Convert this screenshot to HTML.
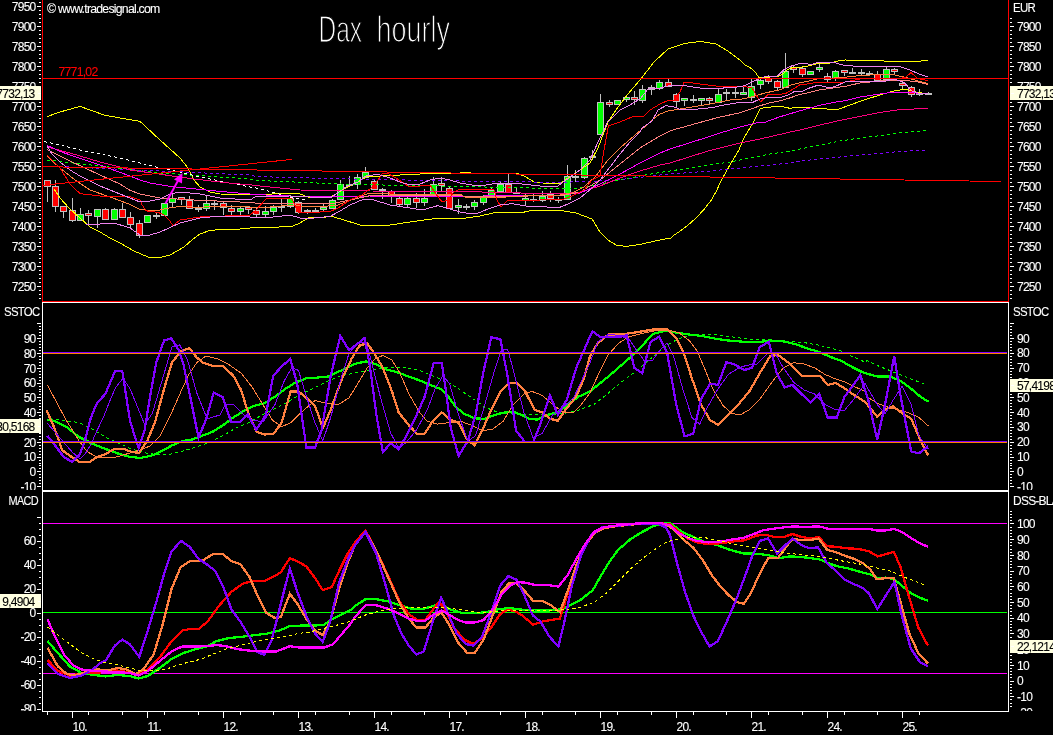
<!DOCTYPE html>
<html><head><meta charset="utf-8"><title>Dax hourly</title>
<style>html,body{margin:0;padding:0;background:#000;overflow:hidden}svg{display:block;will-change:transform;-webkit-font-smoothing:antialiased}</style></head>
<body>
<svg width="1053" height="735" viewBox="0 0 1053 735" shape-rendering="crispEdges">
<rect width="1053" height="735" fill="#000"/>
<defs><clipPath id="c3"><rect x="0" y="491" width="1053" height="220"/></clipPath><clipPath id="c2"><rect x="0" y="302" width="1053" height="188"/></clipPath><clipPath id="c1"><rect x="0" y="0" width="1053" height="301"/></clipPath></defs>
<g clip-path="url(#c1)"><rect x="47" y="180" width="1" height="22" fill="#c0c0c0"/>
<rect x="44.5" y="180.5" width="6" height="6" fill="#ff0000" stroke="#c0c0c0"/>
<rect x="55" y="180" width="1" height="32" fill="#c0c0c0"/>
<rect x="52.5" y="186.5" width="6" height="20" fill="#ff0000" stroke="#c0c0c0"/>
<rect x="63" y="206" width="1" height="12" fill="#c0c0c0"/>
<rect x="60.5" y="206.5" width="6" height="5" fill="#ff0000" stroke="#c0c0c0"/>
<rect x="72" y="198" width="1" height="24" fill="#c0c0c0"/>
<rect x="69.5" y="210.5" width="6" height="10" fill="#ff0000" stroke="#c0c0c0"/>
<rect x="80" y="208" width="1" height="12" fill="#c0c0c0"/>
<rect x="77.5" y="214.5" width="6" height="6" fill="#00ff00" stroke="#c0c0c0"/>
<rect x="88" y="210" width="1" height="14" fill="#c0c0c0"/>
<rect x="85" y="213" width="7" height="3" fill="#c0c0c0"/>
<rect x="86" y="214" width="5" height="1" fill="#ff0000"/>
<rect x="97" y="209" width="1" height="19" fill="#c0c0c0"/>
<rect x="94.5" y="209.5" width="6" height="7" fill="#00ff00" stroke="#c0c0c0"/>
<rect x="105" y="208" width="1" height="11" fill="#c0c0c0"/>
<rect x="102.5" y="209.5" width="6" height="10" fill="#ff0000" stroke="#c0c0c0"/>
<rect x="114" y="208" width="1" height="11" fill="#c0c0c0"/>
<rect x="111.5" y="209.5" width="6" height="10" fill="#00ff00" stroke="#c0c0c0"/>
<rect x="122" y="203" width="1" height="14" fill="#c0c0c0"/>
<rect x="119.5" y="209.5" width="6" height="8" fill="#ff0000" stroke="#c0c0c0"/>
<rect x="130" y="212" width="1" height="16" fill="#c0c0c0"/>
<rect x="127.5" y="217.5" width="6" height="7" fill="#ff0000" stroke="#c0c0c0"/>
<rect x="139" y="220" width="1" height="18" fill="#c0c0c0"/>
<rect x="136.5" y="223.5" width="6" height="12" fill="#ff0000" stroke="#c0c0c0"/>
<rect x="147" y="215" width="1" height="7" fill="#c0c0c0"/>
<rect x="144.5" y="215.5" width="6" height="7" fill="#00ff00" stroke="#c0c0c0"/>
<rect x="156" y="213" width="1" height="6" fill="#c0c0c0"/>
<rect x="153" y="215" width="7" height="2" fill="#c0c0c0"/>
<rect x="164" y="203" width="1" height="12" fill="#c0c0c0"/>
<rect x="161.5" y="203.5" width="6" height="12" fill="#00ff00" stroke="#c0c0c0"/>
<rect x="172" y="194" width="1" height="13" fill="#c0c0c0"/>
<rect x="169.5" y="198.5" width="6" height="4" fill="#00ff00" stroke="#c0c0c0"/>
<rect x="181" y="197" width="1" height="8" fill="#c0c0c0"/>
<rect x="178" y="197" width="7" height="3" fill="#c0c0c0"/>
<rect x="179" y="198" width="5" height="1" fill="#ff0000"/>
<rect x="189" y="196" width="1" height="12" fill="#c0c0c0"/>
<rect x="186.5" y="200.5" width="6" height="8" fill="#ff0000" stroke="#c0c0c0"/>
<rect x="198" y="205" width="1" height="7" fill="#c0c0c0"/>
<rect x="195" y="208" width="7" height="2" fill="#c0c0c0"/>
<rect x="206" y="196" width="1" height="15" fill="#c0c0c0"/>
<rect x="203.5" y="203.5" width="6" height="5" fill="#00ff00" stroke="#c0c0c0"/>
<rect x="214" y="200" width="1" height="10" fill="#c0c0c0"/>
<rect x="211" y="203" width="7" height="2" fill="#c0c0c0"/>
<rect x="223" y="201" width="1" height="14" fill="#c0c0c0"/>
<rect x="220.5" y="203.5" width="6" height="4" fill="#ff0000" stroke="#c0c0c0"/>
<rect x="231" y="205" width="1" height="10" fill="#c0c0c0"/>
<rect x="228.5" y="208.5" width="6" height="3" fill="#ff0000" stroke="#c0c0c0"/>
<rect x="240" y="207" width="1" height="8" fill="#c0c0c0"/>
<rect x="237.5" y="208.5" width="6" height="3" fill="#00ff00" stroke="#c0c0c0"/>
<rect x="248" y="207" width="1" height="7" fill="#c0c0c0"/>
<rect x="245" y="207" width="7" height="3" fill="#c0c0c0"/>
<rect x="246" y="208" width="5" height="1" fill="#ff0000"/>
<rect x="256" y="208" width="1" height="9" fill="#c0c0c0"/>
<rect x="253.5" y="210.5" width="6" height="4" fill="#ff0000" stroke="#c0c0c0"/>
<rect x="265" y="206" width="1" height="12" fill="#c0c0c0"/>
<rect x="262.5" y="211.5" width="6" height="3" fill="#00ff00" stroke="#c0c0c0"/>
<rect x="273" y="205" width="1" height="10" fill="#c0c0c0"/>
<rect x="270.5" y="207.5" width="6" height="4" fill="#00ff00" stroke="#c0c0c0"/>
<rect x="281" y="199" width="1" height="13" fill="#c0c0c0"/>
<rect x="278" y="206" width="7" height="2" fill="#c0c0c0"/>
<rect x="290" y="195" width="1" height="13" fill="#c0c0c0"/>
<rect x="287.5" y="198.5" width="6" height="8" fill="#00ff00" stroke="#c0c0c0"/>
<rect x="298" y="201" width="1" height="13" fill="#c0c0c0"/>
<rect x="295.5" y="202.5" width="6" height="10" fill="#ff0000" stroke="#c0c0c0"/>
<rect x="307" y="209" width="1" height="5" fill="#c0c0c0"/>
<rect x="304" y="210" width="7" height="2" fill="#c0c0c0"/>
<rect x="315" y="208" width="1" height="5" fill="#c0c0c0"/>
<rect x="312" y="210" width="7" height="2" fill="#c0c0c0"/>
<rect x="323" y="203" width="1" height="9" fill="#c0c0c0"/>
<rect x="320" y="207" width="7" height="3" fill="#c0c0c0"/>
<rect x="321" y="208" width="5" height="1" fill="#00ff00"/>
<rect x="332" y="199" width="1" height="10" fill="#c0c0c0"/>
<rect x="329.5" y="200.5" width="6" height="8" fill="#00ff00" stroke="#c0c0c0"/>
<rect x="340" y="180" width="1" height="20" fill="#c0c0c0"/>
<rect x="337.5" y="184.5" width="6" height="15" fill="#00ff00" stroke="#c0c0c0"/>
<rect x="349" y="176" width="1" height="11" fill="#c0c0c0"/>
<rect x="346" y="184" width="7" height="2" fill="#c0c0c0"/>
<rect x="357" y="174" width="1" height="15" fill="#c0c0c0"/>
<rect x="354.5" y="177.5" width="6" height="7" fill="#00ff00" stroke="#c0c0c0"/>
<rect x="365" y="167" width="1" height="11" fill="#c0c0c0"/>
<rect x="362.5" y="172.5" width="6" height="5" fill="#00ff00" stroke="#c0c0c0"/>
<rect x="374" y="179" width="1" height="11" fill="#c0c0c0"/>
<rect x="371.5" y="181.5" width="6" height="8" fill="#ff0000" stroke="#c0c0c0"/>
<rect x="382" y="188" width="1" height="11" fill="#c0c0c0"/>
<rect x="379" y="189" width="7" height="2" fill="#c0c0c0"/>
<rect x="391" y="190" width="1" height="13" fill="#c0c0c0"/>
<rect x="388.5" y="191.5" width="6" height="5" fill="#ff0000" stroke="#c0c0c0"/>
<rect x="399" y="195" width="1" height="12" fill="#c0c0c0"/>
<rect x="396.5" y="198.5" width="6" height="6" fill="#ff0000" stroke="#c0c0c0"/>
<rect x="407" y="197" width="1" height="10" fill="#c0c0c0"/>
<rect x="404.5" y="198.5" width="6" height="6" fill="#00ff00" stroke="#c0c0c0"/>
<rect x="416" y="193" width="1" height="15" fill="#c0c0c0"/>
<rect x="413.5" y="198.5" width="6" height="4" fill="#ff0000" stroke="#c0c0c0"/>
<rect x="424" y="189" width="1" height="17" fill="#c0c0c0"/>
<rect x="421.5" y="198.5" width="6" height="4" fill="#00ff00" stroke="#c0c0c0"/>
<rect x="433" y="177" width="1" height="18" fill="#c0c0c0"/>
<rect x="430.5" y="184.5" width="6" height="11" fill="#00ff00" stroke="#c0c0c0"/>
<rect x="441" y="177" width="1" height="14" fill="#c0c0c0"/>
<rect x="438" y="183" width="7" height="3" fill="#c0c0c0"/>
<rect x="439" y="184" width="5" height="1" fill="#ff0000"/>
<rect x="449" y="186" width="1" height="23" fill="#c0c0c0"/>
<rect x="446.5" y="188.5" width="6" height="20" fill="#ff0000" stroke="#c0c0c0"/>
<rect x="458" y="199" width="1" height="15" fill="#c0c0c0"/>
<rect x="455" y="205" width="7" height="3" fill="#c0c0c0"/>
<rect x="456" y="206" width="5" height="1" fill="#00ff00"/>
<rect x="466" y="204" width="1" height="6" fill="#c0c0c0"/>
<rect x="463" y="206" width="7" height="2" fill="#c0c0c0"/>
<rect x="474" y="200" width="1" height="10" fill="#c0c0c0"/>
<rect x="471.5" y="202.5" width="6" height="4" fill="#00ff00" stroke="#c0c0c0"/>
<rect x="483" y="195" width="1" height="10" fill="#c0c0c0"/>
<rect x="480.5" y="196.5" width="6" height="6" fill="#00ff00" stroke="#c0c0c0"/>
<rect x="491" y="187" width="1" height="10" fill="#c0c0c0"/>
<rect x="488.5" y="190.5" width="6" height="6" fill="#00ff00" stroke="#c0c0c0"/>
<rect x="500" y="182" width="1" height="10" fill="#c0c0c0"/>
<rect x="497.5" y="184.5" width="6" height="7" fill="#00ff00" stroke="#c0c0c0"/>
<rect x="508" y="174" width="1" height="19" fill="#c0c0c0"/>
<rect x="505.5" y="184.5" width="6" height="8" fill="#ff0000" stroke="#c0c0c0"/>
<rect x="516" y="187" width="1" height="7" fill="#c0c0c0"/>
<rect x="513" y="192" width="7" height="2" fill="#c0c0c0"/>
<rect x="525" y="193" width="1" height="12" fill="#c0c0c0"/>
<rect x="522" y="198" width="7" height="3" fill="#c0c0c0"/>
<rect x="523" y="199" width="5" height="1" fill="#00ff00"/>
<rect x="533" y="193" width="1" height="9" fill="#c0c0c0"/>
<rect x="530" y="199" width="7" height="2" fill="#c0c0c0"/>
<rect x="542" y="191" width="1" height="11" fill="#c0c0c0"/>
<rect x="539.5" y="196.5" width="6" height="4" fill="#00ff00" stroke="#c0c0c0"/>
<rect x="550" y="191" width="1" height="11" fill="#c0c0c0"/>
<rect x="547.5" y="194.5" width="6" height="4" fill="#ff0000" stroke="#c0c0c0"/>
<rect x="558" y="197" width="1" height="6" fill="#c0c0c0"/>
<rect x="555" y="199" width="7" height="2" fill="#c0c0c0"/>
<rect x="567" y="165" width="1" height="35" fill="#c0c0c0"/>
<rect x="564.5" y="176.5" width="6" height="23" fill="#00ff00" stroke="#c0c0c0"/>
<rect x="575" y="170" width="1" height="12" fill="#c0c0c0"/>
<rect x="572" y="176" width="7" height="2" fill="#c0c0c0"/>
<rect x="584" y="157" width="1" height="22" fill="#c0c0c0"/>
<rect x="581.5" y="158.5" width="6" height="19" fill="#00ff00" stroke="#c0c0c0"/>
<rect x="592" y="150" width="1" height="10" fill="#c0c0c0"/>
<rect x="589" y="156" width="7" height="2" fill="#c0c0c0"/>
<rect x="600" y="94" width="1" height="40" fill="#c0c0c0"/>
<rect x="597.5" y="102.5" width="6" height="32" fill="#00ff00" stroke="#c0c0c0"/>
<rect x="609" y="100" width="1" height="7" fill="#c0c0c0"/>
<rect x="606" y="102" width="7" height="3" fill="#c0c0c0"/>
<rect x="607" y="103" width="5" height="1" fill="#ff0000"/>
<rect x="617" y="100" width="1" height="5" fill="#c0c0c0"/>
<rect x="614.5" y="100.5" width="6" height="4" fill="#00ff00" stroke="#c0c0c0"/>
<rect x="626" y="96" width="1" height="6" fill="#c0c0c0"/>
<rect x="623" y="97" width="7" height="3" fill="#c0c0c0"/>
<rect x="624" y="98" width="5" height="1" fill="#00ff00"/>
<rect x="634" y="91" width="1" height="14" fill="#c0c0c0"/>
<rect x="631" y="97" width="7" height="3" fill="#c0c0c0"/>
<rect x="632" y="98" width="5" height="1" fill="#ff0000"/>
<rect x="642" y="85" width="1" height="18" fill="#c0c0c0"/>
<rect x="639.5" y="89.5" width="6" height="11" fill="#00ff00" stroke="#c0c0c0"/>
<rect x="651" y="85" width="1" height="10" fill="#c0c0c0"/>
<rect x="648" y="87" width="7" height="3" fill="#c0c0c0"/>
<rect x="649" y="88" width="5" height="1" fill="#00ff00"/>
<rect x="659" y="80" width="1" height="10" fill="#c0c0c0"/>
<rect x="656.5" y="82.5" width="6" height="6" fill="#00ff00" stroke="#c0c0c0"/>
<rect x="668" y="78" width="1" height="9" fill="#c0c0c0"/>
<rect x="665.5" y="82.5" width="6" height="4" fill="#ff0000" stroke="#c0c0c0"/>
<rect x="676" y="93" width="1" height="15" fill="#c0c0c0"/>
<rect x="673.5" y="94.5" width="6" height="7" fill="#ff0000" stroke="#c0c0c0"/>
<rect x="684" y="99" width="1" height="7" fill="#c0c0c0"/>
<rect x="681" y="98" width="7" height="3" fill="#c0c0c0"/>
<rect x="682" y="99" width="5" height="1" fill="#00ff00"/>
<rect x="693" y="95" width="1" height="8" fill="#c0c0c0"/>
<rect x="690" y="99" width="7" height="2" fill="#c0c0c0"/>
<rect x="701" y="99" width="1" height="6" fill="#c0c0c0"/>
<rect x="698" y="98" width="7" height="3" fill="#c0c0c0"/>
<rect x="699" y="99" width="5" height="1" fill="#00ff00"/>
<rect x="709" y="97" width="1" height="7" fill="#c0c0c0"/>
<rect x="706" y="98" width="7" height="3" fill="#c0c0c0"/>
<rect x="707" y="99" width="5" height="1" fill="#ff0000"/>
<rect x="718" y="88" width="1" height="14" fill="#c0c0c0"/>
<rect x="715.5" y="94.5" width="6" height="8" fill="#00ff00" stroke="#c0c0c0"/>
<rect x="726" y="89" width="1" height="11" fill="#c0c0c0"/>
<rect x="723" y="92" width="7" height="2" fill="#c0c0c0"/>
<rect x="735" y="88" width="1" height="10" fill="#c0c0c0"/>
<rect x="732" y="92" width="7" height="2" fill="#c0c0c0"/>
<rect x="743" y="87" width="1" height="8" fill="#c0c0c0"/>
<rect x="740" y="92" width="7" height="3" fill="#c0c0c0"/>
<rect x="741" y="93" width="5" height="1" fill="#00ff00"/>
<rect x="751" y="79" width="1" height="22" fill="#c0c0c0"/>
<rect x="748.5" y="86.5" width="6" height="11" fill="#00ff00" stroke="#c0c0c0"/>
<rect x="760" y="77" width="1" height="12" fill="#c0c0c0"/>
<rect x="757.5" y="80.5" width="6" height="4" fill="#00ff00" stroke="#c0c0c0"/>
<rect x="768" y="75" width="1" height="9" fill="#c0c0c0"/>
<rect x="765.5" y="78.5" width="6" height="3" fill="#ff0000" stroke="#c0c0c0"/>
<rect x="777" y="80" width="1" height="10" fill="#c0c0c0"/>
<rect x="774.5" y="81.5" width="6" height="6" fill="#ff0000" stroke="#c0c0c0"/>
<rect x="785" y="53" width="1" height="34" fill="#c0c0c0"/>
<rect x="782.5" y="71.5" width="6" height="16" fill="#00ff00" stroke="#c0c0c0"/>
<rect x="793" y="66" width="1" height="7" fill="#c0c0c0"/>
<rect x="790" y="67" width="7" height="3" fill="#c0c0c0"/>
<rect x="791" y="68" width="5" height="1" fill="#ff0000"/>
<rect x="802" y="67" width="1" height="10" fill="#c0c0c0"/>
<rect x="799.5" y="68.5" width="6" height="6" fill="#ff0000" stroke="#c0c0c0"/>
<rect x="810" y="71" width="1" height="3" fill="#c0c0c0"/>
<rect x="807.5" y="71.5" width="6" height="3" fill="#00ff00" stroke="#c0c0c0"/>
<rect x="819" y="62" width="1" height="10" fill="#c0c0c0"/>
<rect x="816" y="67" width="7" height="3" fill="#c0c0c0"/>
<rect x="817" y="68" width="5" height="1" fill="#00ff00"/>
<rect x="827" y="73" width="1" height="9" fill="#c0c0c0"/>
<rect x="824.5" y="76.5" width="6" height="3" fill="#ff0000" stroke="#c0c0c0"/>
<rect x="835" y="70" width="1" height="11" fill="#c0c0c0"/>
<rect x="832.5" y="71.5" width="6" height="7" fill="#00ff00" stroke="#c0c0c0"/>
<rect x="844" y="70" width="1" height="6" fill="#c0c0c0"/>
<rect x="841" y="70" width="7" height="3" fill="#c0c0c0"/>
<rect x="842" y="71" width="5" height="1" fill="#ff0000"/>
<rect x="852" y="68" width="1" height="6" fill="#c0c0c0"/>
<rect x="849" y="72" width="7" height="2" fill="#c0c0c0"/>
<rect x="861" y="69" width="1" height="7" fill="#c0c0c0"/>
<rect x="858" y="72" width="7" height="2" fill="#c0c0c0"/>
<rect x="869" y="71" width="1" height="4" fill="#c0c0c0"/>
<rect x="866" y="73" width="7" height="2" fill="#c0c0c0"/>
<rect x="877" y="71" width="1" height="11" fill="#c0c0c0"/>
<rect x="874.5" y="74.5" width="6" height="6" fill="#ff0000" stroke="#c0c0c0"/>
<rect x="886" y="67" width="1" height="12" fill="#c0c0c0"/>
<rect x="883.5" y="69.5" width="6" height="10" fill="#00ff00" stroke="#c0c0c0"/>
<rect x="894" y="68" width="1" height="6" fill="#c0c0c0"/>
<rect x="891" y="69" width="7" height="3" fill="#c0c0c0"/>
<rect x="892" y="70" width="5" height="1" fill="#ff0000"/>
<rect x="902" y="82" width="1" height="8" fill="#c0c0c0"/>
<rect x="899" y="83" width="7" height="3" fill="#c0c0c0"/>
<rect x="900" y="84" width="5" height="1" fill="#ff0000"/>
<rect x="911" y="86" width="1" height="11" fill="#c0c0c0"/>
<rect x="908.5" y="87.5" width="6" height="7" fill="#ff0000" stroke="#c0c0c0"/>
<rect x="919" y="89" width="1" height="7" fill="#c0c0c0"/>
<rect x="916" y="93" width="7" height="2" fill="#c0c0c0"/>
<rect x="928" y="92" width="1" height="3" fill="#c0c0c0"/>
<rect x="925" y="93" width="7" height="2" fill="#c0c0c0"/>
<polyline points="54.0,189.0 60.0,198.0 70.0,209.0 80.0,218.0 90.0,227.0 100.0,232.0 110.0,238.0 120.0,243.0 134.0,251.0 148.0,257.0 158.0,258.0 170.0,255.0 184.0,247.0 192.0,240.0 200.0,234.0 210.0,230.4 220.0,229.6 240.0,229.0 250.0,228.0 256.0,227.8 270.0,227.4 292.0,226.4 300.0,223.0 308.0,218.0 320.0,217.6 332.0,216.4 344.0,220.0 362.0,225.6 386.0,225.6 410.0,222.0 436.0,218.4 460.0,219.0 466.0,218.0 480.0,216.0 496.0,212.4 520.0,213.0 532.0,210.4 560.0,210.4 576.0,213.0 592.0,219.0 600.0,232.0 608.0,240.0 616.0,245.0 626.0,246.4 640.0,244.4 660.0,240.0 670.0,238.0 670.9,238.1 673.4,235.6 681.0,230.5 688.5,224.7 696.1,217.9 703.6,209.9 711.2,200.3 716.2,191.5 721.3,180.2 726.3,171.4 731.3,162.6 738.9,150.0 744.0,138.0 753.0,123.0 760.4,108.3 774.9,106.6 781.9,106.6 789.9,108.3 797.8,107.3 806.8,107.3 813.8,108.3 837.7,109.6 845.0,106.8 850.0,105.0 864.0,100.0 880.0,95.0 896.0,90.4 906.0,89.4 916.0,92.0 928.0,94.0" fill="none" stroke="#ffff00" stroke-width="1" />
<polyline points="47.0,116.6 60.0,112.0 80.0,106.4 104.0,115.0 120.0,118.0 140.0,121.4 160.0,140.0 180.0,158.0 188.0,168.0 194.0,180.0 200.0,187.0 210.0,192.0 220.0,194.0 240.0,194.4 250.0,194.4 256.0,194.8 280.0,193.6 300.0,194.0 308.0,197.0 330.0,197.0 336.0,194.0 346.0,188.0 358.0,182.0 366.0,177.0 380.0,176.0 400.0,175.0 420.0,174.0 436.0,173.0 460.0,173.0 466.0,172.4 480.0,174.0 518.0,173.4 526.0,177.0 534.0,182.0 548.0,183.6 560.0,183.6 568.0,178.0 580.0,170.0 590.0,163.0 598.0,148.0 604.0,132.0 608.0,122.0 616.0,110.0 628.0,94.0 640.0,80.0 654.0,62.0 668.0,49.0 684.0,43.6 700.0,41.4 716.0,44.0 728.0,51.0 740.0,60.0 745.0,65.0 750.0,67.4 755.0,71.9 758.9,77.4 772.9,76.9 777.9,76.4 782.9,73.9 786.9,69.9 791.8,67.9 799.8,67.4 805.8,66.5 811.8,65.0 819.8,63.0 829.7,63.0 839.7,60.5 845.0,60.0 874.0,60.4 900.0,62.0 916.0,61.4 928.0,60.4" fill="none" stroke="#ffff00" stroke-width="1" />
<polyline points="47.0,160.0 100.0,166.0 160.0,173.0 250.0,179.0 256.0,180.4 350.0,184.4 460.0,186.4 466.0,186.6 560.0,188.6 580.0,188.0 600.0,184.0 620.0,180.0 640.0,176.0 660.0,172.4 670.0,171.0 708.0,165.2 730.0,162.0 750.0,158.0 770.0,154.0 790.0,151.0 800.0,149.0 820.0,145.0 840.0,141.0 860.0,138.0 880.0,135.6 900.0,132.4 920.0,131.6 926.0,130.0" fill="none" stroke="#00ff00" stroke-width="1" stroke-dasharray="3 3" />
<polyline points="60.0,166.6 160.0,171.0 250.0,175.0 256.0,176.6 350.0,179.0 460.0,181.0 466.0,181.0 560.0,182.4 600.0,181.0 620.0,179.6 640.0,177.4 660.0,175.0 670.0,174.0 708.0,171.2 730.0,169.0 760.0,166.0 790.0,163.0 800.0,161.0 820.0,159.0 840.0,157.0 860.0,155.0 880.0,153.6 900.0,151.4 926.0,150.0" fill="none" stroke="#8000ff" stroke-width="1" stroke-dasharray="3 3" />
<polyline points="44.0,141.6 60.0,145.0 80.0,150.0 100.0,154.0 120.0,158.0 140.0,163.0 160.0,168.0 180.0,172.0 200.0,177.0 220.0,181.0 240.0,185.0 250.0,187.0 256.0,188.0 270.0,191.6 290.0,197.0 308.0,200.0" fill="none" stroke="#ffffff" stroke-width="1" stroke-dasharray="3 3" />
<polyline points="47.0,147.0 70.0,153.0 100.0,162.0 120.0,167.0 130.0,170.0 140.0,171.4 155.0,173.4 172.0,176.0 194.0,179.0 220.0,182.0 235.0,183.6 250.0,184.8 256.0,185.6 300.0,190.0 370.0,191.0 460.0,191.4 466.0,191.6 560.0,194.0 580.0,192.0 600.0,186.0 620.0,178.0 640.0,171.0 660.0,165.0 670.0,163.0 708.0,151.0 720.0,148.0 740.0,143.0 760.0,139.0 780.0,134.4 790.0,132.0 800.0,130.0 820.0,125.0 840.0,120.4 860.0,116.4 880.0,112.4 900.0,109.6 928.0,108.4" fill="none" stroke="#ff0080" stroke-width="1" />
<polyline points="47.0,145.4 60.0,151.4 80.0,158.4 100.0,165.0 120.0,172.4 130.0,176.0 140.0,180.0 150.0,183.0 170.0,186.4 190.0,188.4 210.0,190.4 235.0,192.8 250.0,194.0 256.0,194.6 290.0,196.0 330.0,197.0 370.0,196.0 460.0,196.0 466.0,196.2 560.0,195.2 580.0,193.0 600.0,184.0 620.0,174.0 640.0,163.0 660.0,153.0 670.0,149.0 708.0,137.0 720.0,133.0 740.0,127.0 760.0,122.0 762.9,123.0 779.9,116.8 799.8,110.8 819.8,105.3 839.7,101.3 845.0,100.8 860.0,97.0 880.0,94.0 892.0,92.4 908.0,92.4 928.0,94.0" fill="none" stroke="#ff00ff" stroke-width="1" />
<polyline points="47.0,149.4 70.0,161.0 100.0,175.0 120.0,184.0 130.0,190.4 140.0,194.0 150.0,196.0 160.0,198.0 194.0,200.0 235.0,201.8 250.0,202.4 256.0,203.2 290.0,203.6 330.0,204.0 350.0,200.0 370.0,195.6 390.0,196.0 460.0,195.6 466.0,196.4 560.0,195.8 580.0,192.0 600.0,180.0 620.0,164.0 640.0,148.0 660.0,136.0 670.0,131.0 674.0,129.6 684.0,127.0 700.0,122.4 720.0,117.0 740.0,112.8 750.0,109.3 759.9,105.8 769.9,102.8 779.9,100.8 789.9,97.9 799.8,94.4 809.8,92.4 819.8,89.9 829.7,88.4 845.0,86.4 860.0,83.0 880.0,81.0 900.0,80.0 916.0,81.6 928.0,84.4" fill="none" stroke="#ff8080" stroke-width="1" />
<polyline points="47.0,156.0 60.0,168.0 75.0,180.0 90.0,190.0 110.0,197.0 130.0,204.4 140.0,209.4 150.0,210.4 158.0,210.4 170.0,207.8 180.0,206.4 200.0,207.4 210.0,206.4 235.0,206.8 250.0,207.0 256.0,207.8 270.0,207.0 286.0,205.6 300.0,206.0 320.0,206.4 336.0,205.6 346.0,202.0 358.0,197.0 370.0,193.0 390.0,194.0 410.0,195.0 430.0,194.0 460.0,194.0 466.0,197.6 496.0,197.6 530.0,195.6 560.0,195.0 572.0,193.0 584.0,187.0 596.0,176.0 608.0,160.0 620.0,148.0 634.0,136.0 648.0,124.0 652.0,120.0 660.0,114.0 668.0,111.0 680.0,109.0 692.0,107.0 710.0,104.0 730.0,100.0 740.0,99.4 750.0,97.4 759.9,94.4 769.9,91.9 779.9,89.9 789.9,85.4 799.8,82.9 809.8,80.9 817.8,78.9 845.0,77.4 850.0,76.4 870.0,75.0 892.0,74.4 904.0,77.0 916.0,80.4 928.0,83.6" fill="none" stroke="#ff8040" stroke-width="1" />
<polyline points="47.0,155.0 60.0,168.0 70.0,184.0 80.0,193.6 100.0,196.0 120.0,196.8 130.0,196.8 140.0,199.8 142.0,204.8 146.0,210.8 158.0,212.4 164.0,214.8 170.0,221.2 173.0,225.6 180.0,220.0 200.0,217.0 250.0,215.0 256.0,210.0 266.0,199.0 286.0,198.0 292.0,199.0 298.0,212.0 310.0,212.4 330.0,211.6 338.0,208.0 350.0,200.0 362.0,195.0 370.0,189.0 378.0,180.0 382.0,174.0 388.0,173.6 396.0,178.0 402.0,182.0 408.0,186.0 420.0,186.0 430.0,185.0 436.0,194.0 442.0,202.0 448.0,200.0 454.0,192.0 460.0,189.0 466.0,189.2 494.0,190.0 497.0,200.0 501.0,207.0 508.0,200.0 520.0,201.0 540.0,200.0 564.0,199.0 572.0,196.0 584.0,190.0 592.0,180.0 600.0,176.0 604.0,150.0 608.4,126.0 620.0,122.0 632.0,117.0 644.0,116.0 650.0,110.0 660.0,104.0 668.0,100.4 674.0,100.0 680.0,92.0 684.0,82.4 688.0,82.4 700.0,84.0 716.0,86.0 728.0,87.0 740.0,86.9 746.0,86.9 752.0,87.9 755.0,92.9 757.9,97.9 760.4,101.8 763.9,98.9 767.9,94.4 779.9,94.4 785.9,93.4 791.8,89.9 799.8,84.9 807.8,83.9 815.8,82.4 842.7,82.4 860.0,79.0 880.0,78.0 900.0,78.6 906.0,77.0 911.0,72.6 918.0,78.6 928.0,80.6" fill="none" stroke="#ff0000" stroke-width="1" />
<polyline points="86.0,225.0 100.0,224.0 114.0,223.0 130.0,228.0 140.0,235.0 148.0,235.6 160.0,232.0 180.0,223.0 200.0,218.0 220.0,216.0 250.0,217.0 256.0,217.4 270.0,217.4 290.0,215.0 300.0,218.0 310.0,218.4 330.0,216.4 340.0,211.0 350.0,205.0 364.0,199.0 374.0,200.0 390.0,205.0 410.0,208.0 422.0,210.0 438.0,205.6 450.0,209.0 460.0,212.0 466.0,213.0 476.0,214.0 488.0,209.0 500.0,205.0 512.0,203.6 526.0,206.0 540.0,206.4 558.0,208.0 568.0,204.0 580.0,198.0 592.0,188.0 600.0,180.0 610.0,167.0 620.0,154.0 630.0,142.0 640.0,132.0 642.0,128.0 652.0,121.0 658.0,110.0 666.0,105.6 674.0,107.0 682.0,110.0 694.0,109.4 712.0,107.6 724.0,105.0 740.0,102.3 753.0,102.3 759.9,98.9 765.9,97.9 780.9,97.4 787.9,94.9 793.8,91.9 801.8,91.4 809.8,87.9 815.8,85.9 819.8,85.4 824.7,86.9 831.7,87.4 837.7,85.4 845.0,81.9 860.0,81.0 874.0,81.0 886.0,81.0 894.0,79.0 904.0,82.4 912.0,91.0 920.0,93.6 928.0,94.0" fill="none" stroke="#ee82ee" stroke-width="1" />
<polyline points="47.0,146.0 52.0,154.0 60.0,162.0 70.0,170.0 80.0,176.0 100.0,186.0 120.0,194.0 140.0,202.0 150.0,201.0 160.0,199.0 170.0,194.0 180.0,192.0 200.0,194.0 220.0,198.0 250.0,200.0 256.0,196.4 290.0,196.0 330.0,198.0 336.0,194.0 346.0,187.0 358.0,182.0 366.0,176.0 378.0,174.4 390.0,178.0 400.0,182.0 410.0,185.0 420.0,184.0 430.0,180.0 440.0,178.0 450.0,180.0 460.0,183.0 466.0,184.0 472.0,185.0 486.0,185.0 498.0,183.0 510.0,183.0 526.0,184.4 540.0,186.0 558.0,186.0 566.0,180.0 580.0,170.0 590.0,160.0 598.0,142.0 604.0,130.0 608.0,121.0 610.0,120.0 620.0,110.0 628.0,106.0 640.0,99.0 648.0,89.0 660.0,88.0 668.0,86.0 684.0,85.6 700.0,88.0 716.0,89.0 728.0,87.4 740.0,86.9 746.0,84.9 752.0,81.9 757.9,79.4 765.9,76.4 772.9,76.7 777.9,75.9 782.9,70.4 789.9,66.5 799.8,63.5 806.8,63.5 809.8,65.0 815.8,63.0 822.8,62.5 835.7,63.0 845.0,65.5 860.0,66.4 880.0,67.0 900.0,66.6 910.0,70.0 920.0,74.4 928.0,77.0" fill="none" stroke="#ee82ee" stroke-width="1" />
<line x1="43" y1="166.7" x2="1001" y2="181.5" stroke="#f00"/>
<line x1="43" y1="185.3" x2="292" y2="159.4" stroke="#f00"/>
<line x1="165.5" y1="203.5" x2="180" y2="177" stroke="#ff00ff" stroke-width="2" shape-rendering="auto"/>
<polygon points="182.5,173 182,183.5 174,179.5" fill="#ff00ff" shape-rendering="auto"/>
<rect x="43" y="78" width="965" height="1" fill="#f00"/></g>
<g><polyline points="47.3,419.6 55.7,421.4 66.1,426.7 79.2,437.1 92.2,443.6 105.3,448.9 118.3,453.6 128.8,456.7 140.5,458.0 152.3,455.4 162.7,450.2 173.2,444.9 182.3,441.0 191.5,439.7 201.9,435.8 212.4,431.9 222.8,425.4 233.3,417.5 243.7,411.0 254.2,405.8 264.6,403.2 275.0,396.6 285.5,388.8 295.9,382.3 306.4,378.3 315.0,377.8 328.1,376.5 341.1,370.5 354.2,364.0 365.9,361.4 375.1,364.0 385.5,369.2 396.0,371.8 406.4,375.7 419.5,380.4 429.9,384.9 440.4,388.8 448.2,396.6 456.0,407.1 463.9,413.6 474.3,418.3 484.8,418.8 495.2,414.9 505.6,412.3 513.5,411.8 521.3,414.9 529.2,418.8 537.0,419.6 547.4,414.9 557.9,412.3 568.3,404.5 578.8,396.6 590.0,391.4 600.4,383.0 610.9,374.4 621.3,365.3 631.8,356.1 642.2,345.7 652.7,334.0 665.7,330.8 676.2,332.6 689.2,334.5 702.3,336.0 715.4,338.7 728.4,340.5 744.1,341.8 757.1,342.3 770.2,340.5 783.3,341.3 796.3,344.4 806.8,348.3 819.8,352.2 830.3,356.9 840.7,360.6 851.2,366.6 861.6,371.8 865.0,373.1 877.2,376.5 890.3,376.5 900.7,381.0 911.2,388.8 920.3,396.6 928.7,401.9" fill="none" stroke="#00ff00" stroke-width="2.25" />
<polyline points="50.4,418.8 66.1,420.7 79.2,422.7 92.2,429.3 105.3,437.1 118.3,443.1 131.4,448.9 144.5,452.8 157.5,454.6 170.6,454.1 183.6,450.9 196.7,446.8 209.8,442.3 222.8,435.8 235.9,428.0 248.9,422.7 262.0,414.9 275.0,408.4 288.1,401.9 301.2,394.0 315.0,387.5 328.1,381.0 341.1,375.7 354.2,373.1 367.2,370.5 380.3,368.4 393.3,367.4 406.4,367.9 419.5,370.5 432.5,375.7 445.6,381.0 458.6,388.8 471.7,397.9 484.8,407.1 497.8,412.3 510.9,413.6 523.9,414.9 537.0,414.9 550.0,414.9 563.1,413.6 576.2,411.0 590.0,405.8 593.9,404.5 605.7,395.3 616.1,386.2 626.6,378.3 637.0,370.5 647.5,361.4 657.9,352.2 668.3,344.4 678.8,338.7 689.2,335.3 699.7,334.0 712.7,334.0 725.8,336.0 738.9,337.9 751.9,339.2 765.0,339.7 778.0,340.5 791.1,341.3 804.2,342.6 817.2,344.9 830.3,347.8 840.7,350.9 851.2,356.1 861.6,360.6 865.0,362.2 866.8,360.6 879.9,366.6 892.9,371.8 906.0,377.0 916.4,381.0 926.9,384.9" fill="none" stroke="#00ff00" stroke-width="1" stroke-dasharray="3 3" />
<polyline points="46.5,410.2 54.4,428.0 62.2,450.2 71.3,456.7 79.2,461.9 89.6,461.9 97.5,456.7 105.3,454.1 114.4,448.9 123.6,448.9 131.4,452.0 139.2,452.8 147.1,441.0 154.9,422.7 164.1,388.8 171.9,362.7 181.0,350.9 189.4,348.3 196.7,357.5 203.2,362.7 212.4,365.8 222.8,365.8 233.3,375.7 241.1,390.1 248.9,414.9 256.8,431.9 264.6,434.5 273.7,433.7 281.6,422.7 290.7,391.4 298.5,391.4 306.4,397.9 315.0,405.8 322.8,428.0 330.7,409.7 341.1,381.0 351.6,358.8 359.4,345.7 367.2,343.1 375.1,354.8 382.9,367.9 392.0,391.4 398.6,412.3 409.0,425.4 416.9,433.7 424.7,433.7 432.5,421.4 441.7,412.3 450.8,420.1 458.6,422.7 466.5,438.4 474.3,445.5 482.1,430.6 491.3,409.7 500.4,391.4 509.6,383.0 517.4,383.0 525.2,391.4 534.4,409.7 542.2,412.3 550.0,418.8 557.9,420.7 565.7,409.7 576.2,396.6 584.0,378.3 590.0,356.1 597.8,343.1 608.3,334.5 618.7,334.5 629.2,333.4 642.2,331.3 655.3,329.2 667.0,329.2 676.2,337.9 684.0,353.5 691.9,378.3 701.0,404.5 710.1,420.1 718.0,424.8 725.8,417.5 736.2,407.1 749.3,391.4 759.8,373.1 770.2,356.1 778.0,354.8 788.5,362.7 801.5,375.7 812.0,375.7 819.8,375.7 827.7,384.9 835.5,383.0 843.3,387.5 852.5,394.0 860.3,398.7 865.0,401.9 869.4,407.1 877.2,416.7 885.1,409.7 892.9,406.3 900.7,412.3 911.2,418.8 919.0,437.1 928.2,455.4" fill="none" stroke="#ff8040" stroke-width="2.25" />
<polyline points="47.3,384.9 55.7,400.5 66.1,420.1 79.2,441.0 87.0,451.5 96.1,456.7 105.3,458.0 115.7,457.2 126.2,454.1 139.2,450.2 149.7,446.2 160.1,435.8 170.6,414.9 181.0,391.4 188.9,374.4 196.7,362.7 205.8,356.1 217.6,358.8 228.0,364.0 241.1,373.1 251.5,386.2 262.0,403.2 272.4,420.1 281.6,426.7 290.7,422.7 301.2,412.3 315.0,400.5 325.4,403.2 338.5,404.5 349.0,397.9 359.4,381.0 367.2,367.9 375.1,358.8 382.9,355.4 392.0,360.1 399.9,373.1 409.0,394.0 419.5,412.3 427.3,421.4 437.7,424.1 448.2,422.7 461.2,421.4 471.7,425.4 482.1,430.6 492.6,429.3 503.0,421.4 513.5,404.5 523.9,394.0 531.8,391.4 542.2,395.3 552.7,404.5 563.1,412.3 573.5,412.3 581.4,404.5 590.0,392.7 597.8,375.7 608.3,354.8 618.7,343.1 629.2,336.6 642.2,333.4 655.3,330.8 668.3,330.0 678.8,332.6 689.2,340.5 697.1,350.9 704.9,369.2 712.7,388.8 723.2,405.8 732.3,413.6 740.2,414.9 749.3,409.7 759.8,399.2 772.8,381.0 783.3,367.9 793.7,362.7 804.2,364.0 814.6,367.9 825.0,374.4 835.5,378.9 845.9,382.3 856.4,387.5 865.0,391.4 866.8,396.6 877.2,403.2 887.7,407.1 898.1,409.7 908.6,412.8 919.0,417.5 928.2,425.9" fill="none" stroke="#ff8040" stroke-width="1" />
<polyline points="47.3,435.8 55.7,446.2 63.5,456.7 71.9,461.9 79.2,455.4 84.4,442.3 90.9,417.5 96.9,403.2 105.3,394.0 115.2,371.0 122.3,371.0 130.1,421.4 138.7,448.3 144.5,430.6 151.0,391.4 156.2,362.7 164.1,340.5 171.4,338.4 178.4,349.6 183.1,362.7 190.2,396.6 198.5,437.6 205.8,420.1 213.7,392.7 222.8,397.2 231.2,422.0 239.8,422.2 247.6,414.1 256.2,429.8 265.9,414.9 273.2,375.7 281.6,366.6 290.2,358.8 297.2,383.6 306.4,447.6 315.0,447.6 321.5,430.6 330.7,375.7 340.3,336.0 349.0,350.1 356.8,344.4 364.6,337.9 369.8,365.3 376.4,414.9 382.9,452.3 390.7,443.1 398.6,449.4 406.4,435.8 415.5,417.5 424.7,396.6 433.8,362.7 441.7,362.7 445.6,388.8 450.8,428.0 458.6,455.9 467.8,441.0 475.6,414.9 483.4,371.8 491.3,337.3 500.4,339.2 507.0,373.1 516.1,430.6 525.2,442.3 533.1,442.3 540.9,422.7 550.0,395.3 557.9,414.9 567.0,399.2 576.2,367.9 590.0,336.6 592.6,331.3 600.4,337.1 610.9,337.1 621.3,336.6 626.6,335.3 634.4,367.9 642.2,373.1 650.6,341.8 659.2,336.6 667.0,352.2 676.2,404.5 684.5,436.3 693.2,433.7 701.0,399.2 710.1,383.6 718.0,384.9 726.3,362.2 733.6,364.0 744.1,370.0 751.9,367.9 759.8,347.0 768.9,341.8 776.7,373.1 784.6,387.5 792.4,384.9 801.5,394.0 810.7,402.4 819.3,394.0 827.7,417.5 836.8,417.5 844.6,396.6 852.5,386.2 860.3,375.2 868.1,399.2 877.2,439.7 885.1,404.5 894.2,356.1 900.7,396.6 911.2,451.5 919.0,453.3 928.2,446.2" fill="none" stroke="#8000ff" stroke-width="2.25" />
<polyline points="47.1,423.0 54.9,431.9 65.1,443.9 72.9,452.8 80.0,458.8 84.9,454.3 91.7,442.9 95.9,432.9 99.8,424.8 104.8,413.9 109.7,401.1 115.7,387.5 123.0,378.3 130.1,388.8 144.5,424.1 152.3,413.6 162.7,378.3 171.9,347.0 179.7,344.9 187.6,360.1 196.7,392.7 207.1,418.8 220.2,414.9 225.4,404.5 233.3,404.5 243.7,414.9 254.2,420.7 263.3,421.4 275.0,404.5 284.2,381.0 292.0,367.4 298.5,370.5 306.4,396.6 315.0,422.7 322.8,441.0 330.7,417.5 341.1,378.3 349.0,353.5 358.1,343.1 365.9,341.8 371.1,360.1 380.3,396.6 390.7,433.2 398.6,447.6 406.4,442.3 416.9,429.3 427.3,409.7 435.1,388.8 443.0,375.7 449.5,383.6 458.6,414.9 467.8,441.0 475.6,435.8 484.8,404.5 495.2,367.9 501.7,349.6 507.7,349.6 513.5,370.5 523.9,412.3 533.1,437.9 542.2,433.2 552.7,414.9 563.1,407.1 573.5,397.9 581.4,381.0 590.0,362.7 597.8,341.8 608.3,334.5 618.7,335.3 629.2,339.2 637.0,350.9 644.8,361.4 652.7,360.1 660.5,349.6 667.0,343.1 673.6,356.1 682.7,388.8 691.9,417.5 699.7,424.1 707.5,407.1 718.0,388.8 728.4,374.4 738.9,367.9 746.7,365.3 757.1,364.0 767.6,353.5 775.4,353.5 783.3,367.9 793.7,382.3 804.2,390.1 814.6,394.0 825.0,404.5 835.5,409.7 844.6,410.2 853.8,399.2 865.0,383.6 868.1,388.8 877.2,404.5 885.1,413.6 892.9,400.5 902.1,386.2 911.2,404.5 919.0,435.8 928.2,448.9" fill="none" stroke="#8000ff" stroke-width="1" />
<rect x="43" y="352" width="964" height="1" fill="#8000ff"/>
<rect x="43" y="353" width="964" height="1" fill="#ff8000"/>
<rect x="43" y="441" width="964" height="1" fill="#8000ff"/>
<rect x="43" y="442" width="964" height="1" fill="#ff8000"/></g>
<g clip-path="url(#c3)"><rect x="43" y="523" width="964" height="1" fill="#f0f"/>
<rect x="43" y="673" width="964" height="1" fill="#f0f"/>
<rect x="43" y="612" width="964" height="1" fill="#0f0"/>
<polyline points="47.5,641.1 57.9,653.0 69.9,666.5 81.9,673.1 93.8,674.9 105.8,676.4 117.8,674.9 129.7,676.1 138.7,678.5 147.7,676.1 159.7,668.0 171.6,659.0 183.6,653.0 195.6,649.1 207.5,646.2 216.5,641.1 228.5,638.1 243.4,636.6 255.4,635.1 267.4,633.6 279.3,630.6 289.8,626.1 303.2,625.5 315.2,625.5 324.2,624.6 333.2,618.6 342.1,614.1 351.1,609.7 355.0,606.1 365.5,599.2 375.9,599.2 387.9,601.3 399.9,605.2 411.8,608.8 423.8,608.8 435.8,605.2 441.8,604.6 450.7,609.7 462.7,613.2 474.7,613.2 486.6,612.1 498.6,609.1 510.6,608.2 522.5,609.7 534.5,610.6 546.5,610.6 558.4,609.7 567.4,606.7 579.4,600.7 592.8,590.2 600.3,576.8 609.3,561.8 618.2,549.8 630.2,539.4 642.2,531.9 654.1,525.9 663.1,523.5 670.0,522.9 682.0,531.9 693.9,537.3 705.9,542.4 717.9,545.3 729.8,549.8 743.3,553.4 756.8,553.7 768.7,555.2 779.2,558.2 789.7,556.4 801.6,557.0 810.6,558.2 819.6,559.4 828.5,563.3 837.5,566.3 849.5,568.7 861.5,572.3 870.4,574.4 877.9,578.2 885.4,577.6 893.8,579.1 901.8,585.7 910.8,593.2 919.8,597.7 927.9,600.7" fill="none" stroke="#00ff00" stroke-width="2.3" />
<polyline points="47.5,659.9 57.9,671.0 69.9,675.5 84.9,673.1 99.8,672.5 114.8,670.1 129.7,672.5 138.7,674.6 147.7,669.5 159.7,657.5 171.6,641.1 182.1,630.6 189.6,629.1 198.5,629.1 207.5,621.6 219.5,605.2 231.5,591.7 243.4,583.3 252.4,581.2 264.4,581.2 273.3,576.8 280.8,572.3 289.8,558.2 297.3,561.2 306.2,566.3 315.2,578.2 322.7,590.2 331.7,587.2 339.1,570.8 348.1,552.8 355.0,542.4 365.5,530.4 375.9,549.8 387.9,575.3 399.9,602.2 408.8,614.1 417.8,620.1 425.3,620.1 432.8,609.7 438.8,602.2 444.7,608.2 453.7,627.6 464.2,639.6 473.2,644.1 482.1,638.1 491.1,627.6 500.1,614.1 507.6,609.7 515.0,611.2 522.5,615.6 533.0,624.6 542.0,621.6 550.9,620.1 559.9,618.6 567.4,594.7 576.4,564.8 585.3,545.3 594.3,533.4 603.3,528.3 618.2,525.9 633.2,524.4 648.2,523.5 663.1,523.5 670.0,524.4 679.0,531.9 687.9,538.5 696.9,542.4 708.9,544.4 720.9,543.2 732.8,541.5 744.8,540.3 756.8,535.5 765.7,534.9 774.7,537.0 783.7,537.0 792.6,534.0 801.6,537.0 810.6,538.5 818.7,537.0 827.1,546.2 836.0,546.8 846.5,548.3 858.5,548.9 868.9,551.3 877.9,556.4 885.4,554.3 893.8,551.9 900.3,566.3 909.3,597.7 918.3,627.6 927.9,645.6" fill="none" stroke="#ff0000" stroke-width="2.3" />
<polyline points="47.5,647.9 57.9,666.5 66.9,674.0 74.4,675.5 84.9,672.5 96.8,669.5 108.8,670.1 117.8,668.0 126.8,669.5 135.7,674.0 143.2,669.5 153.7,654.5 162.6,624.6 171.6,588.7 180.6,567.2 189.6,561.2 201.5,561.2 213.5,553.7 222.5,553.7 231.5,561.2 240.4,564.2 249.4,576.8 258.4,597.7 265.9,612.6 274.8,618.0 280.8,617.1 289.8,593.8 297.3,603.7 306.2,618.6 315.2,630.6 322.7,635.1 330.2,621.6 339.1,588.7 348.1,561.8 355.0,545.3 365.5,531.9 375.9,549.8 387.9,576.8 399.9,603.7 408.8,618.6 416.3,627.6 425.3,627.6 432.8,618.6 441.2,612.1 449.2,624.6 458.2,642.6 467.2,653.0 474.7,653.0 483.6,639.6 492.6,615.6 501.6,591.7 509.1,583.3 516.5,583.3 524.0,590.2 533.0,600.7 542.0,600.7 550.9,605.2 559.9,612.1 567.4,591.7 576.4,564.8 585.3,545.3 594.3,533.4 603.3,528.3 618.2,525.9 633.2,524.4 648.2,523.8 663.1,524.4 670.0,526.5 677.5,533.4 685.0,540.9 693.9,548.3 702.9,560.3 711.9,575.3 720.9,587.2 729.8,596.2 737.3,602.2 743.9,603.7 750.8,593.2 759.7,573.8 768.1,558.2 777.7,558.2 785.2,548.3 792.6,538.5 800.1,540.3 809.1,540.3 818.7,538.5 827.1,549.8 836.0,552.2 845.0,555.8 854.0,558.8 862.9,563.3 870.4,569.3 876.4,579.1 885.4,578.2 893.8,578.2 901.8,606.7 909.3,633.6 918.3,653.0 927.9,663.5" fill="none" stroke="#ff8040" stroke-width="2.3" />
<polyline points="47.5,663.5 57.9,674.0 69.9,677.9 81.9,675.5 90.9,671.0 99.8,663.5 105.8,660.5 114.8,645.6 122.3,639.6 129.7,644.1 139.3,656.9 147.7,630.6 156.7,600.7 164.1,573.8 171.6,551.3 181.2,540.9 189.6,546.8 198.5,558.8 207.5,564.8 215.0,570.8 224.0,588.7 231.5,609.7 240.4,621.6 249.4,636.6 256.9,651.5 264.4,655.1 271.8,639.6 279.3,609.7 289.8,568.4 297.3,591.7 306.2,615.6 315.2,633.6 322.7,642.0 330.2,621.6 339.1,582.7 348.1,558.8 355.0,545.3 365.5,531.9 375.9,552.8 384.9,582.7 393.9,615.6 401.4,633.6 408.8,645.6 416.3,654.5 423.8,651.5 432.8,621.6 441.2,597.7 447.7,612.6 456.7,633.6 465.7,644.1 473.2,645.6 482.1,636.6 491.1,612.6 500.1,585.7 508.2,576.2 516.5,579.7 524.0,594.7 533.0,615.6 540.5,621.6 549.4,636.6 558.4,646.5 564.4,621.6 571.9,585.7 580.9,555.8 591.3,534.9 601.8,527.4 615.3,525.9 630.2,524.4 645.2,523.8 657.1,523.5 666.1,527.4 670.0,534.9 677.5,564.8 685.0,591.7 693.3,615.6 701.4,632.1 709.5,646.5 717.9,641.1 726.8,621.6 735.8,600.7 744.8,576.8 752.3,555.8 759.7,540.9 768.1,538.5 777.1,553.4 785.2,545.3 792.6,538.5 801.6,545.3 809.1,548.3 818.1,547.4 827.1,563.3 836.0,570.8 845.0,579.7 854.0,584.2 861.5,587.2 868.9,593.2 877.3,609.1 885.4,596.2 894.4,582.1 901.8,615.6 910.8,648.5 919.8,662.0 927.9,666.5" fill="none" stroke="#8000ff" stroke-width="2.3" />
<polyline points="47.5,619.5 55.0,636.6 63.9,654.5 72.9,665.0 81.9,669.5 93.8,671.0 105.8,671.6 117.8,671.9 129.7,673.1 138.7,675.5 147.7,671.0 159.7,661.1 171.6,651.5 182.1,646.5 195.6,646.5 207.5,646.2 216.5,645.0 225.5,646.2 237.4,649.1 249.4,650.6 264.4,651.5 276.3,651.5 289.8,646.2 300.3,647.6 312.2,647.6 324.2,647.6 333.2,644.1 342.1,633.6 351.1,623.1 355.0,617.1 365.5,605.2 375.9,605.2 387.9,608.8 399.9,614.1 408.8,618.6 416.3,620.7 425.3,620.7 432.8,615.0 441.8,610.6 450.7,615.6 458.2,620.1 465.7,622.5 474.7,622.5 483.6,620.1 492.6,609.7 501.6,594.7 510.6,585.1 518.0,582.1 525.5,582.7 534.5,584.8 546.5,584.8 558.4,586.6 567.4,575.3 576.4,558.8 585.3,543.8 594.3,531.9 603.3,527.4 618.2,525.3 633.2,523.8 648.2,522.9 660.1,522.9 670.0,525.3 679.0,533.4 687.9,537.9 696.9,540.9 708.9,542.4 720.9,541.5 732.8,539.4 743.3,537.9 753.8,534.0 762.7,530.4 771.7,528.9 783.7,527.4 792.6,526.5 804.6,526.8 819.6,526.5 828.5,528.9 843.5,528.9 858.5,528.9 868.9,528.9 876.4,530.4 885.4,530.4 894.4,528.9 901.8,531.9 910.8,537.9 919.8,543.2 927.9,546.8" fill="none" stroke="#ff00ff" stroke-width="2.3" />
<polyline points="47.5,627.0 57.9,635.1 69.9,644.1 81.9,653.0 93.8,659.0 105.8,662.9 117.8,665.0 129.7,668.0 141.7,671.0 153.7,670.4 165.6,669.5 177.6,665.0 189.6,662.0 201.5,659.0 213.5,653.9 225.5,649.1 237.4,646.2 249.4,643.2 261.4,640.2 273.3,638.1 285.3,636.6 297.3,633.6 309.2,632.1 321.2,629.1 333.2,626.1 345.1,623.1 355.0,619.2 365.5,615.0 375.9,612.1 387.9,609.7 399.9,608.2 414.8,607.6 429.8,607.6 444.7,607.6 459.7,609.7 474.7,612.1 489.6,612.1 504.6,610.6 519.5,610.6 534.5,610.6 549.4,610.6 564.4,609.7 579.4,607.6 594.3,602.2 606.3,593.2 618.2,581.2 630.2,569.3 642.2,558.8 654.1,549.8 666.1,542.4 670.0,540.9 682.0,538.5 693.9,537.0 705.9,537.9 717.9,540.3 729.8,543.2 744.8,546.2 759.7,548.3 774.7,551.3 789.7,553.4 804.6,555.2 819.6,556.4 831.5,558.8 843.5,561.2 855.5,563.3 867.4,565.4 879.4,568.7 891.4,571.4 903.3,576.8 915.3,581.2 925.8,585.7" fill="none" stroke="#ffff00" stroke-width="1" stroke-dasharray="3 3" /></g>
<rect x="42" y="0" width="1" height="302" fill="#f00"/>
<rect x="1008" y="0" width="1" height="302" fill="#f00"/>
<rect x="42" y="301" width="967" height="1" fill="#f00"/>
<rect x="42" y="302" width="967" height="1" fill="#fff"/>
<rect x="42" y="302" width="1" height="410" fill="#fff"/>
<rect x="1008" y="302" width="1" height="410" fill="#fff"/>
<rect x="42" y="490" width="967" height="2" fill="#fff"/>
<rect x="42" y="711" width="967" height="1" fill="#fff"/>
<rect x="39" y="2" width="2" height="1" fill="#fff"/>
<rect x="37" y="6" width="4" height="1" fill="#fff"/>
<rect x="39" y="10" width="2" height="1" fill="#fff"/>
<rect x="39" y="14" width="2" height="1" fill="#fff"/>
<rect x="39" y="18" width="2" height="1" fill="#fff"/>
<rect x="39" y="22" width="2" height="1" fill="#fff"/>
<rect x="37" y="26" width="4" height="1" fill="#fff"/>
<rect x="39" y="30" width="2" height="1" fill="#fff"/>
<rect x="39" y="34" width="2" height="1" fill="#fff"/>
<rect x="39" y="38" width="2" height="1" fill="#fff"/>
<rect x="39" y="42" width="2" height="1" fill="#fff"/>
<rect x="37" y="46" width="4" height="1" fill="#fff"/>
<rect x="39" y="50" width="2" height="1" fill="#fff"/>
<rect x="39" y="54" width="2" height="1" fill="#fff"/>
<rect x="39" y="58" width="2" height="1" fill="#fff"/>
<rect x="39" y="62" width="2" height="1" fill="#fff"/>
<rect x="37" y="66" width="4" height="1" fill="#fff"/>
<rect x="39" y="70" width="2" height="1" fill="#fff"/>
<rect x="39" y="74" width="2" height="1" fill="#fff"/>
<rect x="39" y="78" width="2" height="1" fill="#fff"/>
<rect x="39" y="82" width="2" height="1" fill="#fff"/>
<rect x="37" y="86" width="4" height="1" fill="#fff"/>
<rect x="39" y="90" width="2" height="1" fill="#fff"/>
<rect x="39" y="94" width="2" height="1" fill="#fff"/>
<rect x="39" y="98" width="2" height="1" fill="#fff"/>
<rect x="39" y="102" width="2" height="1" fill="#fff"/>
<rect x="37" y="106" width="4" height="1" fill="#fff"/>
<rect x="39" y="110" width="2" height="1" fill="#fff"/>
<rect x="39" y="114" width="2" height="1" fill="#fff"/>
<rect x="39" y="118" width="2" height="1" fill="#fff"/>
<rect x="39" y="122" width="2" height="1" fill="#fff"/>
<rect x="37" y="126" width="4" height="1" fill="#fff"/>
<rect x="39" y="130" width="2" height="1" fill="#fff"/>
<rect x="39" y="134" width="2" height="1" fill="#fff"/>
<rect x="39" y="138" width="2" height="1" fill="#fff"/>
<rect x="39" y="142" width="2" height="1" fill="#fff"/>
<rect x="37" y="146" width="4" height="1" fill="#fff"/>
<rect x="39" y="150" width="2" height="1" fill="#fff"/>
<rect x="39" y="154" width="2" height="1" fill="#fff"/>
<rect x="39" y="158" width="2" height="1" fill="#fff"/>
<rect x="39" y="162" width="2" height="1" fill="#fff"/>
<rect x="37" y="166" width="4" height="1" fill="#fff"/>
<rect x="39" y="170" width="2" height="1" fill="#fff"/>
<rect x="39" y="174" width="2" height="1" fill="#fff"/>
<rect x="39" y="178" width="2" height="1" fill="#fff"/>
<rect x="39" y="182" width="2" height="1" fill="#fff"/>
<rect x="37" y="186" width="4" height="1" fill="#fff"/>
<rect x="39" y="190" width="2" height="1" fill="#fff"/>
<rect x="39" y="194" width="2" height="1" fill="#fff"/>
<rect x="39" y="198" width="2" height="1" fill="#fff"/>
<rect x="39" y="202" width="2" height="1" fill="#fff"/>
<rect x="37" y="206" width="4" height="1" fill="#fff"/>
<rect x="39" y="210" width="2" height="1" fill="#fff"/>
<rect x="39" y="214" width="2" height="1" fill="#fff"/>
<rect x="39" y="218" width="2" height="1" fill="#fff"/>
<rect x="39" y="222" width="2" height="1" fill="#fff"/>
<rect x="37" y="226" width="4" height="1" fill="#fff"/>
<rect x="39" y="230" width="2" height="1" fill="#fff"/>
<rect x="39" y="234" width="2" height="1" fill="#fff"/>
<rect x="39" y="238" width="2" height="1" fill="#fff"/>
<rect x="39" y="242" width="2" height="1" fill="#fff"/>
<rect x="37" y="246" width="4" height="1" fill="#fff"/>
<rect x="39" y="250" width="2" height="1" fill="#fff"/>
<rect x="39" y="254" width="2" height="1" fill="#fff"/>
<rect x="39" y="258" width="2" height="1" fill="#fff"/>
<rect x="39" y="262" width="2" height="1" fill="#fff"/>
<rect x="37" y="266" width="4" height="1" fill="#fff"/>
<rect x="39" y="270" width="2" height="1" fill="#fff"/>
<rect x="39" y="274" width="2" height="1" fill="#fff"/>
<rect x="39" y="278" width="2" height="1" fill="#fff"/>
<rect x="39" y="282" width="2" height="1" fill="#fff"/>
<rect x="37" y="286" width="4" height="1" fill="#fff"/>
<rect x="39" y="290" width="2" height="1" fill="#fff"/>
<rect x="39" y="294" width="2" height="1" fill="#fff"/>
<rect x="39" y="298" width="2" height="1" fill="#fff"/>
<rect x="1010" y="18" width="2" height="1" fill="#fff"/>
<rect x="1010" y="22" width="2" height="1" fill="#fff"/>
<rect x="1010" y="26" width="4" height="1" fill="#fff"/>
<rect x="1010" y="30" width="2" height="1" fill="#fff"/>
<rect x="1010" y="34" width="2" height="1" fill="#fff"/>
<rect x="1010" y="38" width="2" height="1" fill="#fff"/>
<rect x="1010" y="42" width="2" height="1" fill="#fff"/>
<rect x="1010" y="46" width="4" height="1" fill="#fff"/>
<rect x="1010" y="50" width="2" height="1" fill="#fff"/>
<rect x="1010" y="54" width="2" height="1" fill="#fff"/>
<rect x="1010" y="58" width="2" height="1" fill="#fff"/>
<rect x="1010" y="62" width="2" height="1" fill="#fff"/>
<rect x="1010" y="66" width="4" height="1" fill="#fff"/>
<rect x="1010" y="70" width="2" height="1" fill="#fff"/>
<rect x="1010" y="74" width="2" height="1" fill="#fff"/>
<rect x="1010" y="78" width="2" height="1" fill="#fff"/>
<rect x="1010" y="82" width="2" height="1" fill="#fff"/>
<rect x="1010" y="86" width="4" height="1" fill="#fff"/>
<rect x="1010" y="90" width="2" height="1" fill="#fff"/>
<rect x="1010" y="94" width="2" height="1" fill="#fff"/>
<rect x="1010" y="98" width="2" height="1" fill="#fff"/>
<rect x="1010" y="102" width="2" height="1" fill="#fff"/>
<rect x="1010" y="106" width="4" height="1" fill="#fff"/>
<rect x="1010" y="110" width="2" height="1" fill="#fff"/>
<rect x="1010" y="114" width="2" height="1" fill="#fff"/>
<rect x="1010" y="118" width="2" height="1" fill="#fff"/>
<rect x="1010" y="122" width="2" height="1" fill="#fff"/>
<rect x="1010" y="126" width="4" height="1" fill="#fff"/>
<rect x="1010" y="130" width="2" height="1" fill="#fff"/>
<rect x="1010" y="134" width="2" height="1" fill="#fff"/>
<rect x="1010" y="138" width="2" height="1" fill="#fff"/>
<rect x="1010" y="142" width="2" height="1" fill="#fff"/>
<rect x="1010" y="146" width="4" height="1" fill="#fff"/>
<rect x="1010" y="150" width="2" height="1" fill="#fff"/>
<rect x="1010" y="154" width="2" height="1" fill="#fff"/>
<rect x="1010" y="158" width="2" height="1" fill="#fff"/>
<rect x="1010" y="162" width="2" height="1" fill="#fff"/>
<rect x="1010" y="166" width="4" height="1" fill="#fff"/>
<rect x="1010" y="170" width="2" height="1" fill="#fff"/>
<rect x="1010" y="174" width="2" height="1" fill="#fff"/>
<rect x="1010" y="178" width="2" height="1" fill="#fff"/>
<rect x="1010" y="182" width="2" height="1" fill="#fff"/>
<rect x="1010" y="186" width="4" height="1" fill="#fff"/>
<rect x="1010" y="190" width="2" height="1" fill="#fff"/>
<rect x="1010" y="194" width="2" height="1" fill="#fff"/>
<rect x="1010" y="198" width="2" height="1" fill="#fff"/>
<rect x="1010" y="202" width="2" height="1" fill="#fff"/>
<rect x="1010" y="206" width="4" height="1" fill="#fff"/>
<rect x="1010" y="210" width="2" height="1" fill="#fff"/>
<rect x="1010" y="214" width="2" height="1" fill="#fff"/>
<rect x="1010" y="218" width="2" height="1" fill="#fff"/>
<rect x="1010" y="222" width="2" height="1" fill="#fff"/>
<rect x="1010" y="226" width="4" height="1" fill="#fff"/>
<rect x="1010" y="230" width="2" height="1" fill="#fff"/>
<rect x="1010" y="234" width="2" height="1" fill="#fff"/>
<rect x="1010" y="238" width="2" height="1" fill="#fff"/>
<rect x="1010" y="242" width="2" height="1" fill="#fff"/>
<rect x="1010" y="246" width="4" height="1" fill="#fff"/>
<rect x="1010" y="250" width="2" height="1" fill="#fff"/>
<rect x="1010" y="254" width="2" height="1" fill="#fff"/>
<rect x="1010" y="258" width="2" height="1" fill="#fff"/>
<rect x="1010" y="262" width="2" height="1" fill="#fff"/>
<rect x="1010" y="266" width="4" height="1" fill="#fff"/>
<rect x="1010" y="270" width="2" height="1" fill="#fff"/>
<rect x="1010" y="274" width="2" height="1" fill="#fff"/>
<rect x="1010" y="278" width="2" height="1" fill="#fff"/>
<rect x="1010" y="282" width="2" height="1" fill="#fff"/>
<rect x="1010" y="286" width="4" height="1" fill="#fff"/>
<rect x="1010" y="290" width="2" height="1" fill="#fff"/>
<rect x="1010" y="294" width="2" height="1" fill="#fff"/>
<rect x="1010" y="298" width="2" height="1" fill="#fff"/>
<rect x="37" y="323" width="4" height="1" fill="#fff"/>
<rect x="39" y="326" width="2" height="1" fill="#fff"/>
<rect x="39" y="329" width="2" height="1" fill="#fff"/>
<rect x="39" y="332" width="2" height="1" fill="#fff"/>
<rect x="39" y="335" width="2" height="1" fill="#fff"/>
<rect x="37" y="338" width="4" height="1" fill="#fff"/>
<rect x="39" y="341" width="2" height="1" fill="#fff"/>
<rect x="39" y="344" width="2" height="1" fill="#fff"/>
<rect x="39" y="347" width="2" height="1" fill="#fff"/>
<rect x="39" y="350" width="2" height="1" fill="#fff"/>
<rect x="37" y="353" width="4" height="1" fill="#fff"/>
<rect x="39" y="356" width="2" height="1" fill="#fff"/>
<rect x="39" y="359" width="2" height="1" fill="#fff"/>
<rect x="39" y="362" width="2" height="1" fill="#fff"/>
<rect x="39" y="365" width="2" height="1" fill="#fff"/>
<rect x="37" y="368" width="4" height="1" fill="#fff"/>
<rect x="39" y="371" width="2" height="1" fill="#fff"/>
<rect x="39" y="374" width="2" height="1" fill="#fff"/>
<rect x="39" y="377" width="2" height="1" fill="#fff"/>
<rect x="39" y="380" width="2" height="1" fill="#fff"/>
<rect x="37" y="383" width="4" height="1" fill="#fff"/>
<rect x="39" y="386" width="2" height="1" fill="#fff"/>
<rect x="39" y="389" width="2" height="1" fill="#fff"/>
<rect x="39" y="391" width="2" height="1" fill="#fff"/>
<rect x="39" y="394" width="2" height="1" fill="#fff"/>
<rect x="37" y="397" width="4" height="1" fill="#fff"/>
<rect x="39" y="400" width="2" height="1" fill="#fff"/>
<rect x="39" y="403" width="2" height="1" fill="#fff"/>
<rect x="39" y="406" width="2" height="1" fill="#fff"/>
<rect x="39" y="409" width="2" height="1" fill="#fff"/>
<rect x="37" y="412" width="4" height="1" fill="#fff"/>
<rect x="39" y="415" width="2" height="1" fill="#fff"/>
<rect x="39" y="418" width="2" height="1" fill="#fff"/>
<rect x="39" y="421" width="2" height="1" fill="#fff"/>
<rect x="39" y="424" width="2" height="1" fill="#fff"/>
<rect x="37" y="427" width="4" height="1" fill="#fff"/>
<rect x="39" y="430" width="2" height="1" fill="#fff"/>
<rect x="39" y="433" width="2" height="1" fill="#fff"/>
<rect x="39" y="436" width="2" height="1" fill="#fff"/>
<rect x="39" y="439" width="2" height="1" fill="#fff"/>
<rect x="37" y="442" width="4" height="1" fill="#fff"/>
<rect x="39" y="445" width="2" height="1" fill="#fff"/>
<rect x="39" y="448" width="2" height="1" fill="#fff"/>
<rect x="39" y="451" width="2" height="1" fill="#fff"/>
<rect x="39" y="454" width="2" height="1" fill="#fff"/>
<rect x="37" y="457" width="4" height="1" fill="#fff"/>
<rect x="39" y="460" width="2" height="1" fill="#fff"/>
<rect x="39" y="463" width="2" height="1" fill="#fff"/>
<rect x="39" y="465" width="2" height="1" fill="#fff"/>
<rect x="39" y="468" width="2" height="1" fill="#fff"/>
<rect x="37" y="471" width="4" height="1" fill="#fff"/>
<rect x="39" y="474" width="2" height="1" fill="#fff"/>
<rect x="39" y="477" width="2" height="1" fill="#fff"/>
<rect x="39" y="480" width="2" height="1" fill="#fff"/>
<rect x="39" y="483" width="2" height="1" fill="#fff"/>
<rect x="37" y="486" width="4" height="1" fill="#fff"/>
<rect x="1010" y="323" width="4" height="1" fill="#fff"/>
<rect x="1010" y="326" width="2" height="1" fill="#fff"/>
<rect x="1010" y="329" width="2" height="1" fill="#fff"/>
<rect x="1010" y="332" width="2" height="1" fill="#fff"/>
<rect x="1010" y="335" width="2" height="1" fill="#fff"/>
<rect x="1010" y="338" width="4" height="1" fill="#fff"/>
<rect x="1010" y="341" width="2" height="1" fill="#fff"/>
<rect x="1010" y="344" width="2" height="1" fill="#fff"/>
<rect x="1010" y="347" width="2" height="1" fill="#fff"/>
<rect x="1010" y="350" width="2" height="1" fill="#fff"/>
<rect x="1010" y="353" width="4" height="1" fill="#fff"/>
<rect x="1010" y="356" width="2" height="1" fill="#fff"/>
<rect x="1010" y="359" width="2" height="1" fill="#fff"/>
<rect x="1010" y="362" width="2" height="1" fill="#fff"/>
<rect x="1010" y="365" width="2" height="1" fill="#fff"/>
<rect x="1010" y="368" width="4" height="1" fill="#fff"/>
<rect x="1010" y="371" width="2" height="1" fill="#fff"/>
<rect x="1010" y="374" width="2" height="1" fill="#fff"/>
<rect x="1010" y="377" width="2" height="1" fill="#fff"/>
<rect x="1010" y="380" width="2" height="1" fill="#fff"/>
<rect x="1010" y="383" width="4" height="1" fill="#fff"/>
<rect x="1010" y="386" width="2" height="1" fill="#fff"/>
<rect x="1010" y="389" width="2" height="1" fill="#fff"/>
<rect x="1010" y="391" width="2" height="1" fill="#fff"/>
<rect x="1010" y="394" width="2" height="1" fill="#fff"/>
<rect x="1010" y="397" width="4" height="1" fill="#fff"/>
<rect x="1010" y="400" width="2" height="1" fill="#fff"/>
<rect x="1010" y="403" width="2" height="1" fill="#fff"/>
<rect x="1010" y="406" width="2" height="1" fill="#fff"/>
<rect x="1010" y="409" width="2" height="1" fill="#fff"/>
<rect x="1010" y="412" width="4" height="1" fill="#fff"/>
<rect x="1010" y="415" width="2" height="1" fill="#fff"/>
<rect x="1010" y="418" width="2" height="1" fill="#fff"/>
<rect x="1010" y="421" width="2" height="1" fill="#fff"/>
<rect x="1010" y="424" width="2" height="1" fill="#fff"/>
<rect x="1010" y="427" width="4" height="1" fill="#fff"/>
<rect x="1010" y="430" width="2" height="1" fill="#fff"/>
<rect x="1010" y="433" width="2" height="1" fill="#fff"/>
<rect x="1010" y="436" width="2" height="1" fill="#fff"/>
<rect x="1010" y="439" width="2" height="1" fill="#fff"/>
<rect x="1010" y="442" width="4" height="1" fill="#fff"/>
<rect x="1010" y="445" width="2" height="1" fill="#fff"/>
<rect x="1010" y="448" width="2" height="1" fill="#fff"/>
<rect x="1010" y="451" width="2" height="1" fill="#fff"/>
<rect x="1010" y="454" width="2" height="1" fill="#fff"/>
<rect x="1010" y="457" width="4" height="1" fill="#fff"/>
<rect x="1010" y="460" width="2" height="1" fill="#fff"/>
<rect x="1010" y="463" width="2" height="1" fill="#fff"/>
<rect x="1010" y="465" width="2" height="1" fill="#fff"/>
<rect x="1010" y="468" width="2" height="1" fill="#fff"/>
<rect x="1010" y="471" width="4" height="1" fill="#fff"/>
<rect x="1010" y="474" width="2" height="1" fill="#fff"/>
<rect x="1010" y="477" width="2" height="1" fill="#fff"/>
<rect x="1010" y="480" width="2" height="1" fill="#fff"/>
<rect x="1010" y="483" width="2" height="1" fill="#fff"/>
<rect x="1010" y="486" width="4" height="1" fill="#fff"/>
<rect x="37" y="517" width="4" height="1" fill="#fff"/>
<rect x="39" y="523" width="2" height="1" fill="#fff"/>
<rect x="39" y="529" width="2" height="1" fill="#fff"/>
<rect x="39" y="535" width="2" height="1" fill="#fff"/>
<rect x="37" y="541" width="4" height="1" fill="#fff"/>
<rect x="39" y="547" width="2" height="1" fill="#fff"/>
<rect x="39" y="553" width="2" height="1" fill="#fff"/>
<rect x="39" y="559" width="2" height="1" fill="#fff"/>
<rect x="37" y="565" width="4" height="1" fill="#fff"/>
<rect x="39" y="571" width="2" height="1" fill="#fff"/>
<rect x="39" y="577" width="2" height="1" fill="#fff"/>
<rect x="39" y="583" width="2" height="1" fill="#fff"/>
<rect x="37" y="589" width="4" height="1" fill="#fff"/>
<rect x="39" y="595" width="2" height="1" fill="#fff"/>
<rect x="39" y="601" width="2" height="1" fill="#fff"/>
<rect x="39" y="607" width="2" height="1" fill="#fff"/>
<rect x="37" y="613" width="4" height="1" fill="#fff"/>
<rect x="39" y="619" width="2" height="1" fill="#fff"/>
<rect x="39" y="625" width="2" height="1" fill="#fff"/>
<rect x="39" y="631" width="2" height="1" fill="#fff"/>
<rect x="37" y="637" width="4" height="1" fill="#fff"/>
<rect x="39" y="643" width="2" height="1" fill="#fff"/>
<rect x="39" y="649" width="2" height="1" fill="#fff"/>
<rect x="39" y="655" width="2" height="1" fill="#fff"/>
<rect x="37" y="661" width="4" height="1" fill="#fff"/>
<rect x="39" y="667" width="2" height="1" fill="#fff"/>
<rect x="39" y="673" width="2" height="1" fill="#fff"/>
<rect x="39" y="679" width="2" height="1" fill="#fff"/>
<rect x="37" y="685" width="4" height="1" fill="#fff"/>
<rect x="39" y="691" width="2" height="1" fill="#fff"/>
<rect x="39" y="697" width="2" height="1" fill="#fff"/>
<rect x="39" y="703" width="2" height="1" fill="#fff"/>
<rect x="37" y="709" width="4" height="1" fill="#fff"/>
<rect x="1010" y="511" width="2" height="1" fill="#fff"/>
<rect x="1010" y="514" width="2" height="1" fill="#fff"/>
<rect x="1010" y="517" width="2" height="1" fill="#fff"/>
<rect x="1010" y="520" width="2" height="1" fill="#fff"/>
<rect x="1010" y="523" width="4" height="1" fill="#fff"/>
<rect x="1010" y="527" width="2" height="1" fill="#fff"/>
<rect x="1010" y="530" width="2" height="1" fill="#fff"/>
<rect x="1010" y="533" width="2" height="1" fill="#fff"/>
<rect x="1010" y="536" width="2" height="1" fill="#fff"/>
<rect x="1010" y="539" width="4" height="1" fill="#fff"/>
<rect x="1010" y="542" width="2" height="1" fill="#fff"/>
<rect x="1010" y="545" width="2" height="1" fill="#fff"/>
<rect x="1010" y="549" width="2" height="1" fill="#fff"/>
<rect x="1010" y="552" width="2" height="1" fill="#fff"/>
<rect x="1010" y="555" width="4" height="1" fill="#fff"/>
<rect x="1010" y="558" width="2" height="1" fill="#fff"/>
<rect x="1010" y="561" width="2" height="1" fill="#fff"/>
<rect x="1010" y="564" width="2" height="1" fill="#fff"/>
<rect x="1010" y="567" width="2" height="1" fill="#fff"/>
<rect x="1010" y="571" width="4" height="1" fill="#fff"/>
<rect x="1010" y="574" width="2" height="1" fill="#fff"/>
<rect x="1010" y="577" width="2" height="1" fill="#fff"/>
<rect x="1010" y="580" width="2" height="1" fill="#fff"/>
<rect x="1010" y="583" width="2" height="1" fill="#fff"/>
<rect x="1010" y="586" width="4" height="1" fill="#fff"/>
<rect x="1010" y="589" width="2" height="1" fill="#fff"/>
<rect x="1010" y="593" width="2" height="1" fill="#fff"/>
<rect x="1010" y="596" width="2" height="1" fill="#fff"/>
<rect x="1010" y="599" width="2" height="1" fill="#fff"/>
<rect x="1010" y="602" width="4" height="1" fill="#fff"/>
<rect x="1010" y="605" width="2" height="1" fill="#fff"/>
<rect x="1010" y="608" width="2" height="1" fill="#fff"/>
<rect x="1010" y="611" width="2" height="1" fill="#fff"/>
<rect x="1010" y="615" width="2" height="1" fill="#fff"/>
<rect x="1010" y="618" width="4" height="1" fill="#fff"/>
<rect x="1010" y="621" width="2" height="1" fill="#fff"/>
<rect x="1010" y="624" width="2" height="1" fill="#fff"/>
<rect x="1010" y="627" width="2" height="1" fill="#fff"/>
<rect x="1010" y="630" width="2" height="1" fill="#fff"/>
<rect x="1010" y="633" width="4" height="1" fill="#fff"/>
<rect x="1010" y="637" width="2" height="1" fill="#fff"/>
<rect x="1010" y="640" width="2" height="1" fill="#fff"/>
<rect x="1010" y="643" width="2" height="1" fill="#fff"/>
<rect x="1010" y="646" width="2" height="1" fill="#fff"/>
<rect x="1010" y="649" width="4" height="1" fill="#fff"/>
<rect x="1010" y="652" width="2" height="1" fill="#fff"/>
<rect x="1010" y="655" width="2" height="1" fill="#fff"/>
<rect x="1010" y="659" width="2" height="1" fill="#fff"/>
<rect x="1010" y="662" width="2" height="1" fill="#fff"/>
<rect x="1010" y="665" width="4" height="1" fill="#fff"/>
<rect x="1010" y="668" width="2" height="1" fill="#fff"/>
<rect x="1010" y="671" width="2" height="1" fill="#fff"/>
<rect x="1010" y="674" width="2" height="1" fill="#fff"/>
<rect x="1010" y="677" width="2" height="1" fill="#fff"/>
<rect x="1010" y="681" width="4" height="1" fill="#fff"/>
<rect x="1010" y="684" width="2" height="1" fill="#fff"/>
<rect x="1010" y="687" width="2" height="1" fill="#fff"/>
<rect x="1010" y="690" width="2" height="1" fill="#fff"/>
<rect x="1010" y="693" width="2" height="1" fill="#fff"/>
<rect x="1010" y="696" width="4" height="1" fill="#fff"/>
<rect x="1010" y="699" width="2" height="1" fill="#fff"/>
<rect x="1010" y="703" width="2" height="1" fill="#fff"/>
<rect x="1010" y="706" width="2" height="1" fill="#fff"/>
<rect x="72" y="712" width="1" height="6" fill="#fff"/>
<rect x="47" y="712" width="1" height="3" fill="#fff"/>
<rect x="88" y="712" width="1" height="3" fill="#fff"/>
<rect x="122" y="712" width="1" height="3" fill="#fff"/>
<rect x="147" y="712" width="1" height="6" fill="#fff"/>
<rect x="164" y="712" width="1" height="3" fill="#fff"/>
<rect x="198" y="712" width="1" height="3" fill="#fff"/>
<rect x="223" y="712" width="1" height="6" fill="#fff"/>
<rect x="240" y="712" width="1" height="3" fill="#fff"/>
<rect x="273" y="712" width="1" height="3" fill="#fff"/>
<rect x="298" y="712" width="1" height="6" fill="#fff"/>
<rect x="315" y="712" width="1" height="3" fill="#fff"/>
<rect x="349" y="712" width="1" height="3" fill="#fff"/>
<rect x="374" y="712" width="1" height="6" fill="#fff"/>
<rect x="391" y="712" width="1" height="3" fill="#fff"/>
<rect x="424" y="712" width="1" height="3" fill="#fff"/>
<rect x="449" y="712" width="1" height="6" fill="#fff"/>
<rect x="466" y="712" width="1" height="3" fill="#fff"/>
<rect x="500" y="712" width="1" height="3" fill="#fff"/>
<rect x="525" y="712" width="1" height="6" fill="#fff"/>
<rect x="542" y="712" width="1" height="3" fill="#fff"/>
<rect x="575" y="712" width="1" height="3" fill="#fff"/>
<rect x="600" y="712" width="1" height="6" fill="#fff"/>
<rect x="617" y="712" width="1" height="3" fill="#fff"/>
<rect x="651" y="712" width="1" height="3" fill="#fff"/>
<rect x="676" y="712" width="1" height="6" fill="#fff"/>
<rect x="693" y="712" width="1" height="3" fill="#fff"/>
<rect x="726" y="712" width="1" height="3" fill="#fff"/>
<rect x="751" y="712" width="1" height="6" fill="#fff"/>
<rect x="768" y="712" width="1" height="3" fill="#fff"/>
<rect x="802" y="712" width="1" height="3" fill="#fff"/>
<rect x="827" y="712" width="1" height="6" fill="#fff"/>
<rect x="844" y="712" width="1" height="3" fill="#fff"/>
<rect x="877" y="712" width="1" height="3" fill="#fff"/>
<rect x="902" y="712" width="1" height="6" fill="#fff"/>
<rect x="919" y="712" width="1" height="3" fill="#fff"/>
<g style="font-family:'Liberation Sans',Arial,sans-serif;font-size:12px;letter-spacing:-0.75px" shape-rendering="auto" stroke-width="0.1">
<g clip-path="url(#c1)"><text x="35.5" y="11.0" text-anchor="end" fill="#fff" stroke="#fff" >7950</text><text x="35.5" y="31.0" text-anchor="end" fill="#fff" stroke="#fff" >7900</text><text x="1017.0" y="31.0" text-anchor="start" fill="#fff" stroke="#fff" >7900</text><text x="35.5" y="51.0" text-anchor="end" fill="#fff" stroke="#fff" >7850</text><text x="1017.0" y="51.0" text-anchor="start" fill="#fff" stroke="#fff" >7850</text><text x="35.5" y="71.0" text-anchor="end" fill="#fff" stroke="#fff" >7800</text><text x="1017.0" y="71.0" text-anchor="start" fill="#fff" stroke="#fff" >7800</text><text x="35.5" y="91.0" text-anchor="end" fill="#fff" stroke="#fff" >7750</text><text x="1017.0" y="91.0" text-anchor="start" fill="#fff" stroke="#fff" >7750</text><text x="35.5" y="111.0" text-anchor="end" fill="#fff" stroke="#fff" >7700</text><text x="1017.0" y="111.0" text-anchor="start" fill="#fff" stroke="#fff" >7700</text><text x="35.5" y="131.0" text-anchor="end" fill="#fff" stroke="#fff" >7650</text><text x="1017.0" y="131.0" text-anchor="start" fill="#fff" stroke="#fff" >7650</text><text x="35.5" y="151.0" text-anchor="end" fill="#fff" stroke="#fff" >7600</text><text x="1017.0" y="151.0" text-anchor="start" fill="#fff" stroke="#fff" >7600</text><text x="35.5" y="171.0" text-anchor="end" fill="#fff" stroke="#fff" >7550</text><text x="1017.0" y="171.0" text-anchor="start" fill="#fff" stroke="#fff" >7550</text><text x="35.5" y="191.0" text-anchor="end" fill="#fff" stroke="#fff" >7500</text><text x="1017.0" y="191.0" text-anchor="start" fill="#fff" stroke="#fff" >7500</text><text x="35.5" y="211.0" text-anchor="end" fill="#fff" stroke="#fff" >7450</text><text x="1017.0" y="211.0" text-anchor="start" fill="#fff" stroke="#fff" >7450</text><text x="35.5" y="231.0" text-anchor="end" fill="#fff" stroke="#fff" >7400</text><text x="1017.0" y="231.0" text-anchor="start" fill="#fff" stroke="#fff" >7400</text><text x="35.5" y="251.0" text-anchor="end" fill="#fff" stroke="#fff" >7350</text><text x="1017.0" y="251.0" text-anchor="start" fill="#fff" stroke="#fff" >7350</text><text x="35.5" y="271.0" text-anchor="end" fill="#fff" stroke="#fff" >7300</text><text x="1017.0" y="271.0" text-anchor="start" fill="#fff" stroke="#fff" >7300</text><text x="35.5" y="291.0" text-anchor="end" fill="#fff" stroke="#fff" >7250</text><text x="1017.0" y="291.0" text-anchor="start" fill="#fff" stroke="#fff" >7250</text></g>
<text x="1013.0" y="12.0" text-anchor="start" fill="#fff" stroke="#fff"  textLength="22" lengthAdjust="spacingAndGlyphs">EUR</text>
<text x="47.0" y="12.6" text-anchor="start" fill="#fff" stroke="#fff"  textLength="112.5" lengthAdjust="spacingAndGlyphs">© www.tradesignal.com</text>
<text x="58.5" y="76.0" text-anchor="start" fill="#f00" stroke="#f00"  textLength="39" lengthAdjust="spacingAndGlyphs">7771,02</text>
<g clip-path="url(#c2)"><text x="35.5" y="342.9" text-anchor="end" fill="#fff" stroke="#fff" >90</text><text x="1017.0" y="342.6" text-anchor="start" fill="#fff" stroke="#fff" >90</text><text x="35.5" y="357.7" text-anchor="end" fill="#fff" stroke="#fff" >80</text><text x="1017.0" y="357.4" text-anchor="start" fill="#fff" stroke="#fff" >80</text><text x="35.5" y="372.5" text-anchor="end" fill="#fff" stroke="#fff" >70</text><text x="1017.0" y="372.2" text-anchor="start" fill="#fff" stroke="#fff" >70</text><text x="35.5" y="387.3" text-anchor="end" fill="#fff" stroke="#fff" >60</text><text x="1017.0" y="387.0" text-anchor="start" fill="#fff" stroke="#fff" >60</text><text x="35.5" y="402.1" text-anchor="end" fill="#fff" stroke="#fff" >50</text><text x="1017.0" y="401.8" text-anchor="start" fill="#fff" stroke="#fff" >50</text><text x="35.5" y="416.9" text-anchor="end" fill="#fff" stroke="#fff" >40</text><text x="1017.0" y="416.6" text-anchor="start" fill="#fff" stroke="#fff" >40</text><text x="35.5" y="431.7" text-anchor="end" fill="#fff" stroke="#fff" >30</text><text x="1017.0" y="431.4" text-anchor="start" fill="#fff" stroke="#fff" >30</text><text x="35.5" y="446.5" text-anchor="end" fill="#fff" stroke="#fff" >20</text><text x="1017.0" y="446.2" text-anchor="start" fill="#fff" stroke="#fff" >20</text><text x="35.5" y="461.3" text-anchor="end" fill="#fff" stroke="#fff" >10</text><text x="1017.0" y="461.0" text-anchor="start" fill="#fff" stroke="#fff" >10</text><text x="35.5" y="476.1" text-anchor="end" fill="#fff" stroke="#fff" >0</text><text x="1017.0" y="475.8" text-anchor="start" fill="#fff" stroke="#fff" >0</text><text x="35.5" y="490.9" text-anchor="end" fill="#fff" stroke="#fff" >-10</text><text x="1017.0" y="490.6" text-anchor="start" fill="#fff" stroke="#fff" >-10</text></g>
<text x="4.0" y="316.0" text-anchor="start" fill="#fff" stroke="#fff"  textLength="35.5" lengthAdjust="spacingAndGlyphs">SSTOC</text>
<text x="1013.0" y="316.0" text-anchor="start" fill="#fff" stroke="#fff"  textLength="35.5" lengthAdjust="spacingAndGlyphs">SSTOC</text>
<g clip-path="url(#c3)"><text x="35.5" y="545.3" text-anchor="end" fill="#fff" stroke="#fff" >60</text><text x="35.5" y="569.3" text-anchor="end" fill="#fff" stroke="#fff" >40</text><text x="35.5" y="593.3" text-anchor="end" fill="#fff" stroke="#fff" >20</text><text x="35.5" y="617.3" text-anchor="end" fill="#fff" stroke="#fff" >0</text><text x="35.5" y="641.3" text-anchor="end" fill="#fff" stroke="#fff" >-20</text><text x="35.5" y="665.3" text-anchor="end" fill="#fff" stroke="#fff" >-40</text><text x="35.5" y="689.3" text-anchor="end" fill="#fff" stroke="#fff" >-60</text><text x="35.5" y="713.3" text-anchor="end" fill="#fff" stroke="#fff" >-80</text><text x="1017.0" y="528.1" text-anchor="start" fill="#fff" stroke="#fff" >100</text><text x="1017.0" y="543.8" text-anchor="start" fill="#fff" stroke="#fff" >90</text><text x="1017.0" y="559.5" text-anchor="start" fill="#fff" stroke="#fff" >80</text><text x="1017.0" y="575.3" text-anchor="start" fill="#fff" stroke="#fff" >70</text><text x="1017.0" y="591.0" text-anchor="start" fill="#fff" stroke="#fff" >60</text><text x="1017.0" y="606.7" text-anchor="start" fill="#fff" stroke="#fff" >50</text><text x="1017.0" y="622.4" text-anchor="start" fill="#fff" stroke="#fff" >40</text><text x="1017.0" y="638.1" text-anchor="start" fill="#fff" stroke="#fff" >30</text><text x="1017.0" y="653.9" text-anchor="start" fill="#fff" stroke="#fff" >20</text><text x="1017.0" y="669.6" text-anchor="start" fill="#fff" stroke="#fff" >10</text><text x="1017.0" y="685.3" text-anchor="start" fill="#fff" stroke="#fff" >0</text><text x="1017.0" y="701.0" text-anchor="start" fill="#fff" stroke="#fff" >-10</text><text x="1017.0" y="716.7" text-anchor="start" fill="#fff" stroke="#fff" >-20</text></g>
<text x="8.5" y="505.0" text-anchor="start" fill="#fff" stroke="#fff"  textLength="29.5" lengthAdjust="spacingAndGlyphs">MACD</text>
<text x="1013.0" y="505.0" text-anchor="start" fill="#fff" stroke="#fff"  textLength="46" lengthAdjust="spacingAndGlyphs">DSS-BLA</text>
<text x="72.5" y="731.0" text-anchor="start" fill="#fff" stroke="#fff" >10.</text>
<text x="147.5" y="731.0" text-anchor="start" fill="#fff" stroke="#fff" >11.</text>
<text x="223.5" y="731.0" text-anchor="start" fill="#fff" stroke="#fff" >12.</text>
<text x="298.5" y="731.0" text-anchor="start" fill="#fff" stroke="#fff" >13.</text>
<text x="374.5" y="731.0" text-anchor="start" fill="#fff" stroke="#fff" >14.</text>
<text x="449.5" y="731.0" text-anchor="start" fill="#fff" stroke="#fff" >17.</text>
<text x="525.5" y="731.0" text-anchor="start" fill="#fff" stroke="#fff" >18.</text>
<text x="600.5" y="731.0" text-anchor="start" fill="#fff" stroke="#fff" >19.</text>
<text x="676.5" y="731.0" text-anchor="start" fill="#fff" stroke="#fff" >20.</text>
<text x="751.5" y="731.0" text-anchor="start" fill="#fff" stroke="#fff" >21.</text>
<text x="827.5" y="731.0" text-anchor="start" fill="#fff" stroke="#fff" >24.</text>
<text x="902.5" y="731.0" text-anchor="start" fill="#fff" stroke="#fff" >25.</text>
<rect x="0" y="86" width="41" height="14" fill="#ffffe1"/><rect x="38" y="93" width="3" height="1" fill="#fff"/><text x="34.5" y="98.0" text-anchor="end" fill="#000" stroke="#000" >7732,13</text>
<rect x="1010" y="86" width="43" height="14" fill="#ffffe1"/><rect x="1011" y="93" width="3" height="1" fill="#fff"/><text x="1017.0" y="98.0" text-anchor="start" fill="#000" stroke="#000" >7732,13</text>
<rect x="0" y="419" width="41" height="14" fill="#ffffe1"/><rect x="38" y="426" width="3" height="1" fill="#fff"/><text x="34.5" y="431.0" text-anchor="end" fill="#000" stroke="#000" >30,5168</text>
<rect x="1010" y="379" width="43" height="13" fill="#ffffe1"/><rect x="1011" y="385" width="3" height="1" fill="#fff"/><text x="1017.0" y="390.0" text-anchor="start" fill="#000" stroke="#000" >57,4198</text>
<rect x="0" y="594" width="41" height="14" fill="#ffffe1"/><rect x="38" y="601" width="3" height="1" fill="#fff"/><text x="34.5" y="606.0" text-anchor="end" fill="#000" stroke="#000" >9,4904</text>
<rect x="1010" y="640" width="43" height="13" fill="#ffffe1"/><rect x="1011" y="646" width="3" height="1" fill="#fff"/><text x="1017.0" y="651.0" text-anchor="start" fill="#000" stroke="#000" >22,1214</text>
</g>
<text y="42" fill="#fff" stroke="#000" stroke-width="1.25" paint-order="fill" shape-rendering="auto" style="font-family:'Liberation Sans',Arial,sans-serif;font-size:37.5px"><tspan x="318.6" textLength="43.5" lengthAdjust="spacingAndGlyphs">Dax</tspan> <tspan x="376.5" textLength="73.5" lengthAdjust="spacingAndGlyphs">hourly</tspan></text>
</svg>
</body></html>
